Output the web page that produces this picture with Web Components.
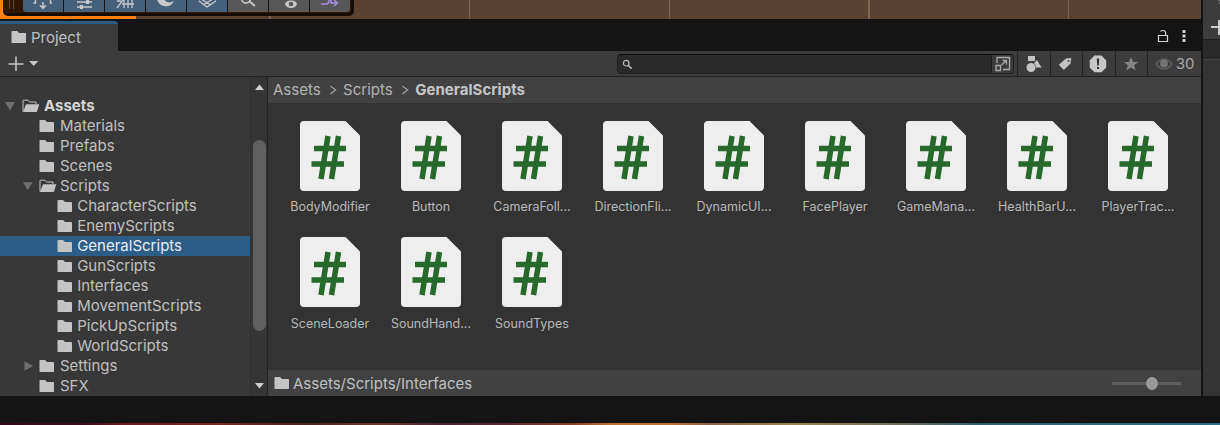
<!DOCTYPE html>
<html lang="en">
<head>
<meta charset="utf-8">
<title>Project</title>
<style>
html,body{margin:0;height:100%;overflow:hidden;background:#141414}
body{font-family:Inter,sans-serif;color:#c0c0c0;font-size:15px}
</style>
</head>
<body>
<editor-window></editor-window>
<script>
const define = (name, html) => customElements.define(name, class extends HTMLElement {
  connectedCallback() {
    if (this.shadowRoot) return;
    const root = this.attachShadow({ mode: 'open' });
    const t = document.createElement('template');
    t.innerHTML = typeof html === 'function' ? html(this) : html;
    root.append(t.content.cloneNode(true));
  }
});

define('folder-icon', el => `
<style>:host{display:block;width:16px;height:14px;flex:none}svg{display:block}</style>
${el.hasAttribute('open')
  ? `<svg width="18" height="14" viewBox="0 0 18 14"><path d="M1 12.5V1.7Q1 1.2 1.5 1.2H6L7.5 3H14V5" fill="none" stroke="#c4c4c4" stroke-width="1"/><path d="M4 5.2H17.3L15 12.4Q14.7 13 14 13H1Z" fill="#c4c4c4"/></svg>`
  : `<svg width="16" height="14" viewBox="0 0 16 14"><path d="M1.2 1H6L8 3H14.2Q15 3 15 3.8V12.2Q15 13 14.2 13H1.2Q.5 13 .5 12.2V1.8Q.5 1 1.2 1Z" fill="#c4c4c4"/></svg>`}`);

define('scene-strip', `
<style>
:host{display:block;position:relative;height:19px;width:1201px;overflow:hidden;background:#5a4130}
.hot{width:136px;height:19px;background:#ff7f0b}
.grid{position:absolute;top:0;width:1px;height:19px;background:#77695f}
.bar{position:absolute;left:3px;top:-14px;width:351px;height:30px;box-sizing:border-box;border-radius:5px;background:#2f1703;border:3px solid #150c06;border-left:0}
.buttons{position:absolute;left:23px;top:0;display:flex;gap:1px;height:12px;border-radius:0 0 3px 3px;overflow:hidden;background:#1b1511}
.buttons span{width:40px;background:#46607c;height:12px}
.buttons span.off{background:#585858}
svg{display:block}
.grip{position:absolute;left:9px;top:0;width:3px;height:9px;border:solid #5d4a3a;border-width:0 1px}
</style>
<div class="hot"></div>
<i class="grid" style="left:70px;background:#d07a38"></i><i class="grid" style="left:269px;width:2px"></i><i class="grid" style="left:469px"></i><i class="grid" style="left:669px"></i><i class="grid" style="left:868px;width:2px"></i><i class="grid" style="left:1068px"></i>
<div class="bar"></div><i class="grip"></i>
<div class="buttons">
<span><svg width="40" height="12"><path d="M12.5 0V3H10.5M27.5 0V3H29M20 2V8M17 5.2L20 8.4L23 5.2" fill="none" stroke="#c8c8c8" stroke-width="1.5"/></svg></span>
<span><svg width="40" height="12"><path d="M13 2H28M13 7H28" stroke="#c8c8c8" stroke-width="1.4"/><path d="M22 0h3v4h-3zM16 5h3v4h-3z" fill="#c8c8c8"/></svg></span>
<span><svg width="40" height="12"><path d="M12 8L18 0M12 1H16M19 0V8M23 0V8M27 0V8M17 4H29" fill="none" stroke="#c8c8c8" stroke-width="1.3"/></svg></span>
<span><svg width="40" height="12"><path d="M11 -1A9 9 0 0 0 28 1A7 7 0 0 1 17 -3Z" fill="#c8c8c8"/></svg></span>
<span><svg width="40" height="12"><path d="M12 1L20 7L29 1M14 -1L24 5M26 -1L16 5M11 0L20 -6L29 0" fill="none" stroke="#c8c8c8" stroke-width="1.3"/></svg></span>
<span class="off"><svg width="40" height="12"><circle cx="18" cy="-1.5" r="4.5" fill="none" stroke="#c8c8c8" stroke-width="1.5"/><path d="M21 1L27 6" stroke="#c8c8c8" stroke-width="2"/></svg></span>
<span class="off"><svg width="40" height="12"><path d="M16 4Q17 .5 22 .5T28 4Q26.500 8 22 8T16 4Z" fill="#c8c8c8"/><circle cx="22" cy="4" r="2.3" fill="#585858"/></svg></span>
<span class="off"><svg width="40" height="12"><path d="M11 4H16Q19 4 19 0M21 -1V3H27M24 0L27.5 3L24 6" fill="none" stroke="#a58ae0" stroke-width="1.6"/></svg></span>
</div>`);

define('tab-bar', `
<style>
:host{display:flex;height:32px;background:#141414;justify-content:space-between}
.tab{display:flex;align-items:center;gap:4px;box-sizing:border-box;width:118px;height:30px;margin-top:2px;padding-left:11px;background:#3c3c3c;border-top:3px solid #2c5d87;border-radius:0 4px 0 0}
.tab folder-icon{margin-top:-1px}
.tools{display:flex;gap:12px;padding:10px 14px 0 0}
</style>
<div class="tab"><folder-icon></folder-icon><slot></slot></div>
<div class="tools">
<svg width="12" height="14"><path d="M1.500 6.500H10.500V12.500H1.500ZM3.500 2.500Q4 1.500 6 1.500Q8.600 1.500 8.600 4V6" fill="none" stroke="#d2d2d2" stroke-width="1.2"/></svg>
<svg width="6" height="14"><path d="M1.500 1h3v3h-3zM1.500 5.500h3v3h-3zM1.500 10h3v3h-3z" fill="#d2d2d2"/></svg>
</div>`);

define('tool-button', el => `
<style>:host{display:flex;align-items:center;justify-content:center;box-sizing:border-box;border-left:1px solid #232323;height:25px;width:${el.getAttribute('w')}px;padding-right:${el.getAttribute('inset') || 0}px}</style><slot></slot>`);

define('project-toolbar', `
<style>
:host{display:flex;height:25px;background:#3c3c3c;border-bottom:1px solid #232323}
svg{display:block}
.add{width:617px;flex:none}
.search{display:flex;box-sizing:border-box;width:397px;height:20px;margin:3px 3px 0 0;background:#2a2a2a;border:1px solid #202020;border-top-color:#0d0d0d;border-radius:4px;justify-content:space-between;overflow:hidden}
.pick{background:#3c3c3c;border-left:1px solid #202020;width:21px}
.count{margin-left:3px;font-size:15px;color:#a8a8a8}
</style>
<div class="add"><svg width="45" height="25"><path d="M16 5.5V20M8.500 13H23.500" stroke="#c8c8c8" stroke-width="1.5"/><path d="M29 10H38.400L33.700 15Z" fill="#c4c4c4"/></svg></div>
<div class="search">
<svg width="20" height="18" viewBox="0 0 20 18"><circle cx="8.2" cy="8.2" r="2.800" fill="none" stroke="#bcbcbc" stroke-width="1.2"/><path d="M10.200 10.200L13.600 13.600" stroke="#bcbcbc" stroke-width="1.6"/></svg>
<div class="pick"><svg width="21" height="18"><path d="M5 8V2.500H17.500V14.500H11M4 10.500H8.500V15.500H4ZM9.500 10L14.500 5.500M10.500 5.500H14.500V9.500" fill="none" stroke="#aaa" stroke-width="1.3"/></svg></div>
</div>
<tool-button w="33"><svg width="18" height="18"><path d="M3 1H10V6H3Z" fill="#c4c4c4"/><circle cx="6" cy="12.500" r="4.500" fill="#c4c4c4"/><path d="M12 5L16.500 12.500H11Q10.800 9 9 8Z" fill="#c4c4c4"/></svg></tool-button>
<tool-button w="32" inset="3"><svg width="14" height="14"><path d="M8 1.500L12.500 1Q13.300 1 13.200 2L12.500 6.500L5.800 13L.8 7.800Z" fill="#c4c4c4"/><circle cx="10.500" cy="4" r="1" fill="#3c3c3c"/></svg></tool-button>
<tool-button w="33" inset="2"><svg width="18" height="18"><path d="M5.500 .5H12.500L17.200 5.500V12.500L12.500 17.300H5.500L.7 12.500V5.500Z" fill="#c8c8c8"/><path d="M7.800 3.500H10.200L9.800 10.500H8.200ZM8 12H10V14H8Z" fill="#303030"/></svg></tool-button>
<tool-button w="32" inset="1"><svg width="16" height="16"><path d="M8 1L10.100 6H15.200L11.100 9.200L12.700 14.600L8 11.400L3.300 14.600L4.900 9.200L.8 6H5.900Z" fill="#858585"/></svg></tool-button>
<tool-button w="54"><svg width="18" height="12"><path d="M.8 6Q5 1 9 1T17.200 6Q13 11 9 11T.8 6Z" fill="none" stroke="#626262" stroke-width="1.2"/><circle cx="9" cy="5.500" r="4" fill="#737373"/></svg><span class="count">30</span></tool-button>`);

define('tree-row', el => {
  const level = +el.getAttribute('level');
  const arrow = el.getAttribute('arrow');
  return `
<style>
:host{display:flex;align-items:center;box-sizing:border-box;height:20px;padding-left:${4 + level * 17.6}px;${el.hasAttribute('selected') ? 'background:#2c5d87;color:#e8eef4;' : ''}${level ? '' : 'font-weight:700;color:#d6d6d6;'}}
.arrow{width:${level ? 17.4 : 18}px;height:12px;flex:none;display:block}
folder-icon{margin-right:${level === 1 ? 5 : level ? 4.6 : 6}px}
span{white-space:nowrap;padding-bottom:2px}
</style>
<svg class="arrow" viewBox="0 0 18 12" preserveAspectRatio="xMinYMid">${arrow === 'down' ? '<path d="M1 2H11L6 10.5Z" fill="#6f6f6f"/>' : arrow === 'right' ? '<path d="M2.5 1V11L11.5 6Z" fill="#6f6f6f"/>' : ''}</svg>
<folder-icon ${arrow === 'down' ? 'open' : ''}></folder-icon><span><slot></slot></span>`;
});

define('asset-tree', `
<style>
:host{display:flex;width:267px;height:319px;background:#383838;border-right:1px solid #222;flex:none;overflow:hidden}
.rows{width:250px;padding-top:19px;box-sizing:border-box}
.scroll{width:17px;box-sizing:border-box;border-left:1px solid #303030;background:#353535;display:flex;flex-direction:column;align-items:center}
.thumb{width:13px;height:191px;border-radius:7px;background:#5f5f5f;margin:48px 0 50px 1px}
svg{display:block;flex:none;margin-left:1px}
</style>
<div class="rows">
<tree-row level="0" arrow="down">Assets</tree-row>
<tree-row level="1">Materials</tree-row>
<tree-row level="1">Prefabs</tree-row>
<tree-row level="1">Scenes</tree-row>
<tree-row level="1" arrow="down">Scripts</tree-row>
<tree-row level="2">CharacterScripts</tree-row>
<tree-row level="2">EnemyScripts</tree-row>
<tree-row level="2" selected>GeneralScripts</tree-row>
<tree-row level="2">GunScripts</tree-row>
<tree-row level="2">Interfaces</tree-row>
<tree-row level="2">MovementScripts</tree-row>
<tree-row level="2">PickUpScripts</tree-row>
<tree-row level="2">WorldScripts</tree-row>
<tree-row level="1" arrow="right">Settings</tree-row>
<tree-row level="1">SFX</tree-row>
</div>
<div class="scroll">
<svg width="11" height="15"><path d="M1 13L5.500 7.500L10 13Z" fill="#d0d0d0"/></svg>
<div class="thumb"></div>
<svg width="11" height="12"><path d="M1 2L5.500 7.500L10 2Z" fill="#d0d0d0"/></svg>
</div>`);

define('script-tile', `
<style>
:host{display:flex;flex-direction:column;align-items:center;width:101px;height:116px}
svg{display:block}
.name{font-size:12.5px;line-height:16px;margin-top:8.2px;padding-left:1px;color:#b8b8b8;white-space:nowrap}
</style>
<svg width="60" height="70" viewBox="0 0 60 70"><path d="M4 0H45.500L60 14.500V66Q60 70 56 70H4Q0 70 0 66V4Q0 0 4 0Z" fill="#eee"/>
<path d="M28 15L21 58M38.500 15L31.500 58M14 27.500H46M11.500 43H44" fill="none" stroke="#26692b" stroke-width="5.5"/></svg>
<div class="name"><slot></slot></div>`);

define('asset-browser', `
<style>
:host{display:flex;flex-direction:column;width:933px;height:319px;background:#333}
.crumbs,.path{display:flex;align-items:center;height:26px;background:#414141;flex:none}
.crumbs{padding:0 0 2px 5px;color:#b4b4b4;box-sizing:border-box}
.crumbs svg{margin:1px 6.3px 0 8.2px}
.crumbs b{color:#c6c6c6;letter-spacing:.04px}
.grid{display:grid;grid-template-columns:repeat(9,101px);grid-auto-rows:116.4px;align-content:start;padding:18px 0 0 11px;height:267px;box-sizing:border-box}
.path{padding:0 20px 0 6px;gap:3px}
.slider{margin-left:auto;width:69px;height:3px;background:#5e5e5e;display:flex;align-items:center}
.slider i{width:12px;height:13px;border-radius:50%;background:#999;margin-left:34px}
</style>
<div class="crumbs"><span>Assets</span><svg width="8" height="10"><path d="M1.500 1L6.500 5L1.500 9" fill="none" stroke="#999" stroke-width="1.5"/></svg><span>Scripts</span><svg width="8" height="10"><path d="M1.500 1L6.500 5L1.500 9" fill="none" stroke="#999" stroke-width="1.5"/></svg><b>GeneralScripts</b></div>
<div class="grid">
<script-tile>BodyModifier</script-tile><script-tile>Button</script-tile><script-tile>CameraFoll...</script-tile><script-tile>DirectionFli...</script-tile><script-tile>DynamicUI...</script-tile><script-tile>FacePlayer</script-tile><script-tile>GameMana...</script-tile><script-tile>HealthBarU...</script-tile><script-tile>PlayerTrac...</script-tile><script-tile>SceneLoader</script-tile><script-tile>SoundHand...</script-tile><script-tile>SoundTypes</script-tile>
</div>
<div class="path"><folder-icon></folder-icon><span>Assets/Scripts/Interfaces</span><div class="slider"><i></i></div></div>`);

define('side-panel', `
<style>
:host{display:block;width:17px;height:396px;background:#333;overflow:hidden}
.head{height:39px;background:#3c3c3c}.sub{height:19px;background:#2a2a2a;border-top:1px solid #202020;border-bottom:1px solid #444}
svg{display:block}
</style>
<div class="head"><svg width="17" height="39"><path d="M8 27H17M16 20V35" stroke="#ccc" stroke-width="2"/><path d="M15 0H17M16 3H17" stroke="#bbb" stroke-width="1"/></svg></div><div class="sub"></div>`);

define('editor-window', `
<style>
:host{display:flex;flex-direction:column;height:425px;width:1220px;background:#141414}
.main{display:flex;justify-content:space-between;height:396px}
.left{width:1201px}
.content{display:flex}
.desk{margin-top:27px;height:2px;background:linear-gradient(90deg,#35091a,#3a0c1a 7%,#6b1c20 10%,#74281f 18%,#4a2420 25%,#6a3828 31%,#4a2434 36%,#5a2a30 42%,#8a4228 47%,#bd7232 50%,#bd7232 55%,#8a6248 58%,#9a8450 65%,#6c6c5c 74%,#33606e 80%,#2c6f86)}
</style>
<div class="main"><div class="left"><scene-strip></scene-strip><tab-bar>Project</tab-bar><project-toolbar></project-toolbar>
<div class="content"><asset-tree></asset-tree><asset-browser></asset-browser></div></div><side-panel></side-panel></div>
<div class="desk"></div>`);
</script>
</body>
</html>
